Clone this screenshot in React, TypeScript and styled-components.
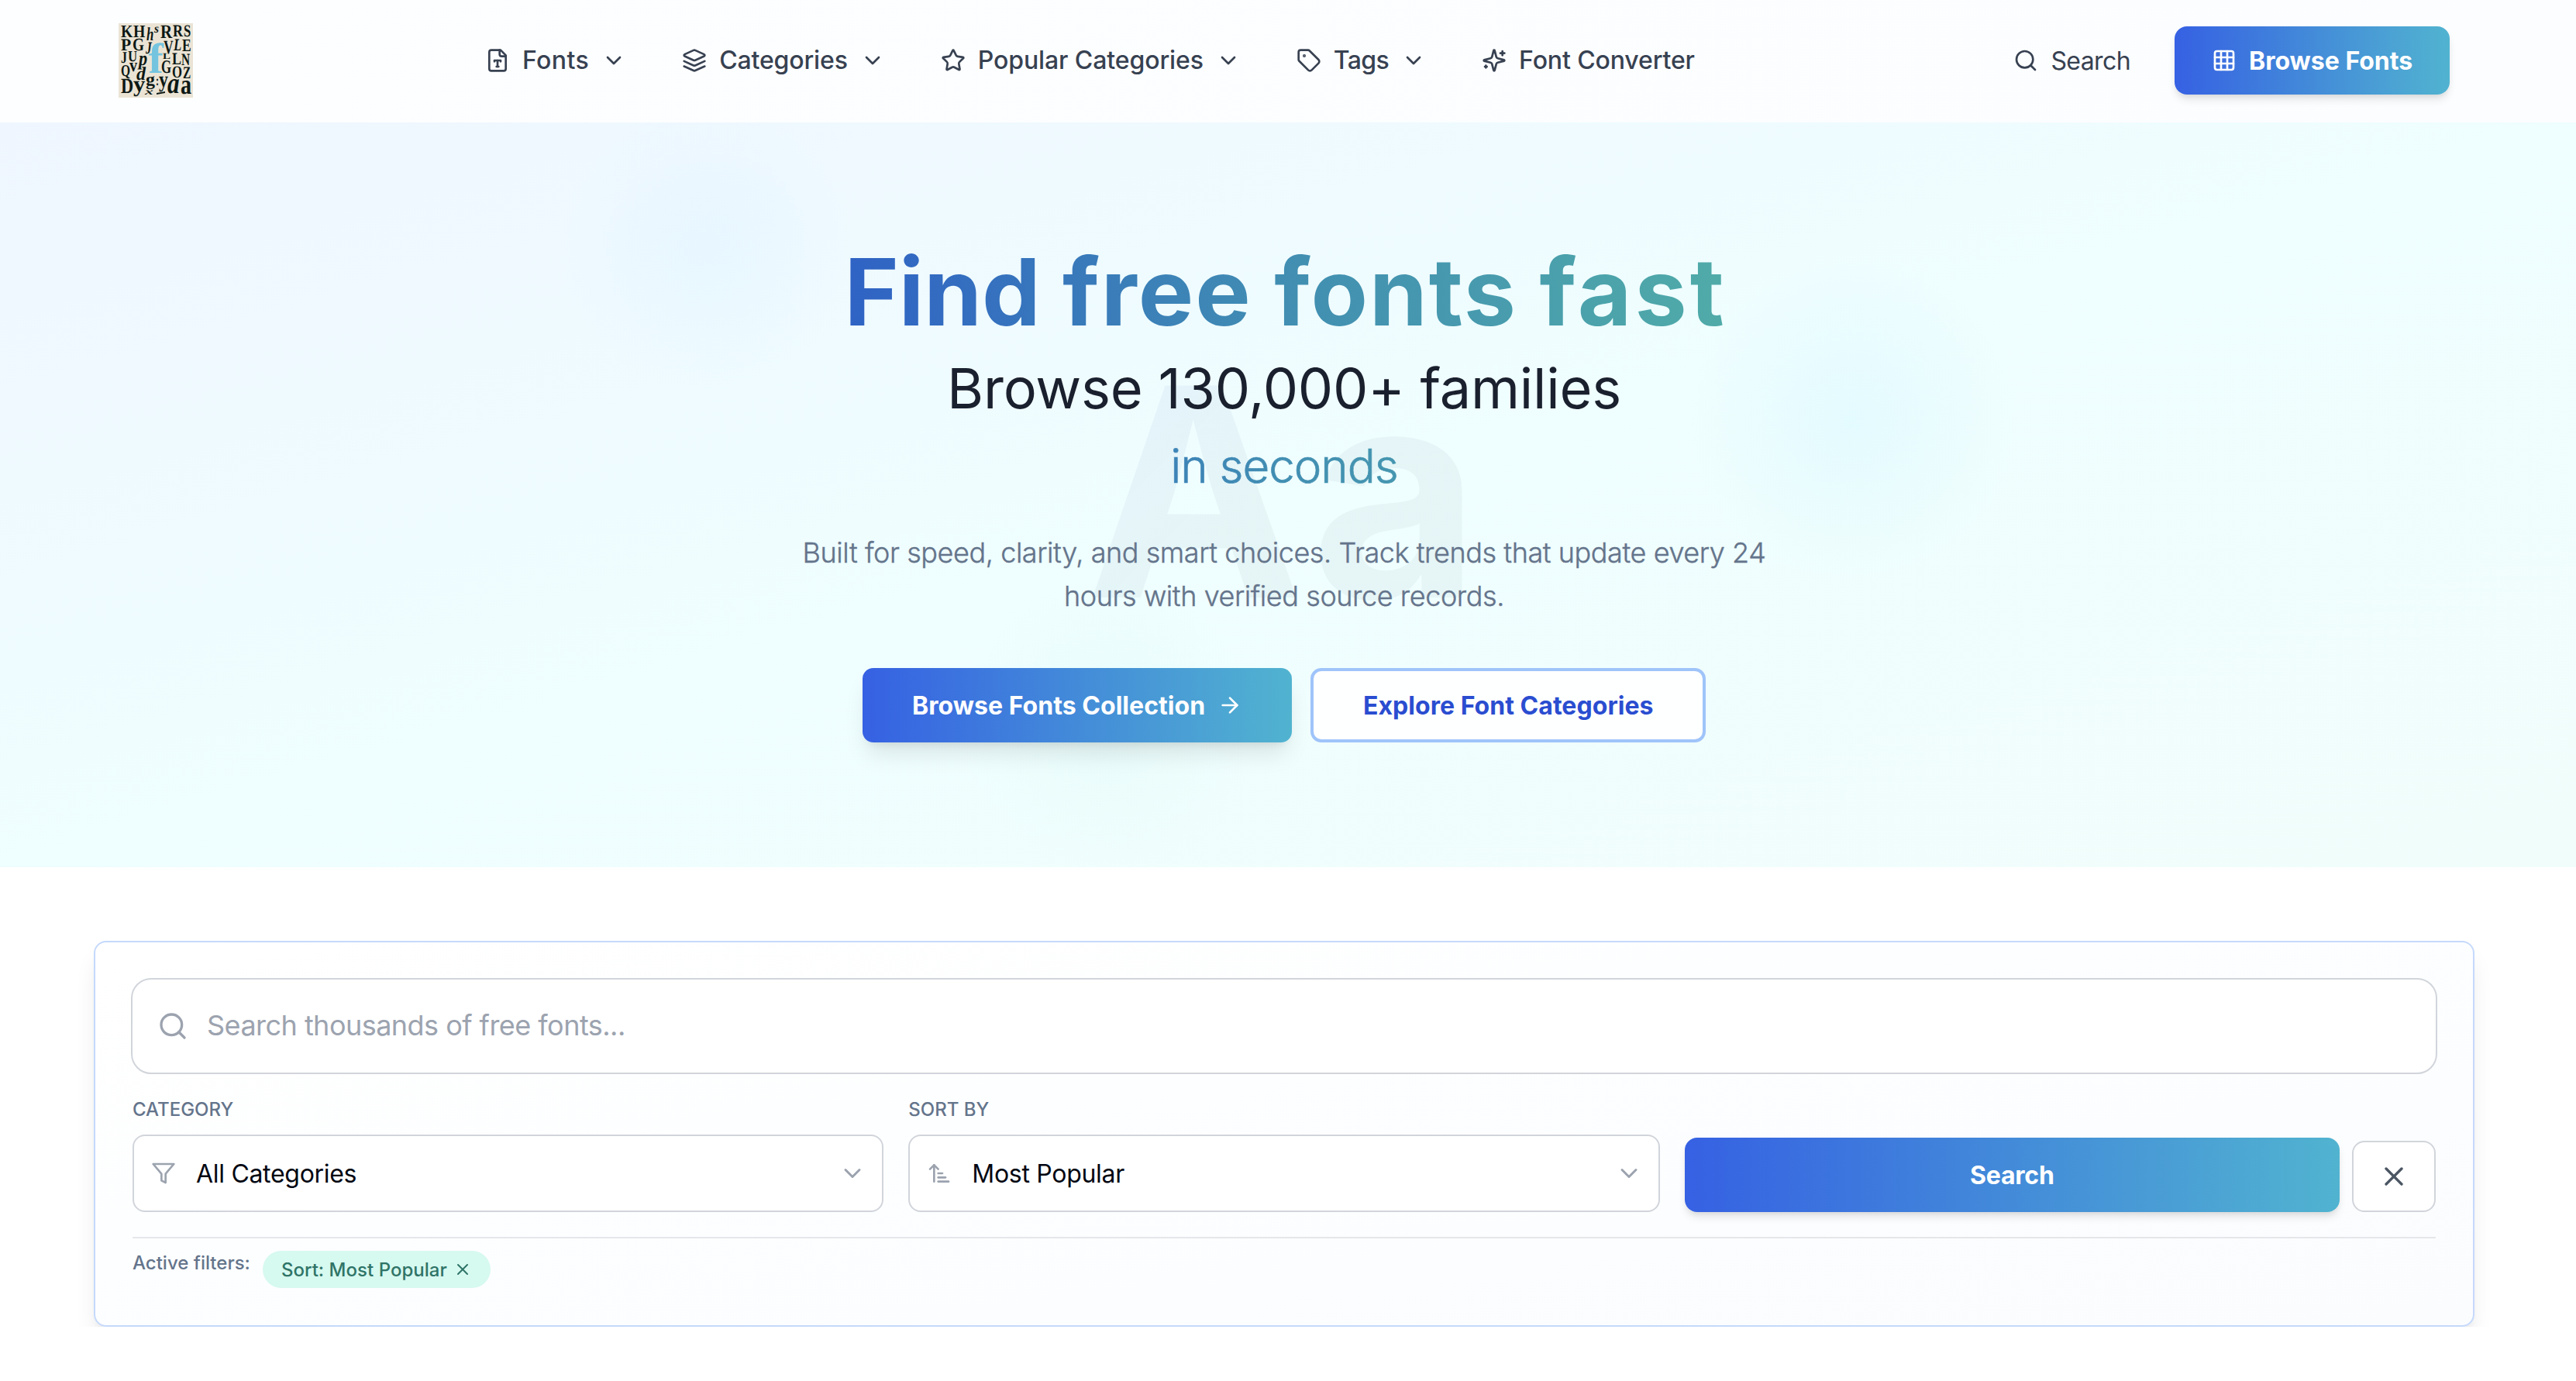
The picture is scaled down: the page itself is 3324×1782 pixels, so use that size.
import {
  ArrowRight,
  ArrowUpNarrowWide,
  ChevronDown,
  Grid3x3,
  Search,
  Star,
  Tag,
  X,
} from 'lucide-react';
import type { ReactNode } from 'react';
import styled, { createGlobalStyle, css } from 'styled-components';

const GlobalStyle = createGlobalStyle`
  *, *::before, *::after {
    box-sizing: border-box;
  }
  body {
    margin: 0;
    background: #ffffff;
    font-family: Inter, 'Liberation Sans', sans-serif;
    color: #374151;
    overflow: hidden;
  }
  button, input {
    font-family: inherit;
  }
  h1, p {
    margin: 0;
  }
  svg {
    flex-shrink: 0;
    display: block;
  }
`;

const primaryFill = css`
  background: linear-gradient(90deg, #3661e3 0%, #438bd9 50%, #51b3d0 100%);
  color: #ffffff;
`;

const Header = styled.header`
  display: flex;
  align-items: center;
  height: 158px;
  padding: 0 163px 2px 153px;
  background: linear-gradient(90deg, #fdfeff, #fcfdff);
`;

const NavBar = styled.nav`
  display: flex;
  align-items: center;
  gap: 72px;
  margin-left: 377px;
`;

const NavItem = styled.a<{ $spacing: number }>`
  display: flex;
  align-items: center;
  gap: 16px;
  font-size: 32px;
  line-height: 48px;
  font-weight: 500;
  letter-spacing: ${(props) => props.$spacing}px;
  white-space: nowrap;
`;

const HeaderActions = styled.div`
  display: flex;
  align-items: center;
  gap: 56px;
  margin-left: auto;
`;

const SearchLink = styled.a`
  display: flex;
  align-items: center;
  gap: 16px;
  margin-right: 1px;
  font-size: 32px;
  letter-spacing: -0.6px;
`;

const BrowseButton = styled.button`
  ${primaryFill}
  display: flex;
  align-items: center;
  gap: 16px;
  width: 355px;
  height: 88px;
  padding: 0 0 0 48px;
  border: 0;
  border-radius: 16px;
  font-size: 32px;
  font-weight: 700;
  white-space: nowrap;
  box-shadow:
    0 8px 12px -2px rgba(0, 0, 0, 0.1),
    0 4px 8px -4px rgba(0, 0, 0, 0.1);
`;

const Hero = styled.section`
  position: relative;
  display: flex;
  flex-direction: column;
  align-items: center;
  height: 961px;
  padding: 153px 10px 0 0;
  overflow: hidden;
  background:
    radial-gradient(circle 190px at 911px 160px, rgba(205, 234, 255, 0.22), rgba(205, 234, 255, 0.11) 50%, transparent),
    radial-gradient(circle 210px at 2390px 385px, rgba(195, 241, 255, 0.26), rgba(195, 241, 255, 0.13) 50%, transparent),
    radial-gradient(circle 190px at 1430px 780px, rgba(195, 243, 234, 0.17), rgba(195, 243, 234, 0.08) 50%, transparent),
    linear-gradient(to bottom right, #eff6ff 0%, #effeff 50%, #f1fdfb 100%);
`;

const Watermark = styled.div`
  position: absolute;
  top: 285px;
  left: 1401px;
  font-size: 376px;
  line-height: 384px;
  font-weight: 700;
  letter-spacing: 10px;
  color: transparent;
  background: linear-gradient(135deg, rgba(40, 80, 200, 0.055), rgba(16, 34, 50, 0.04) 45%);
  background-clip: text;
  -webkit-background-clip: text;
  user-select: none;
`;

const HeroTitle = styled.h1`
  position: relative;
  display: flex;
  flex-direction: column;
  width: 1146px;
  text-align: center;
  white-space: nowrap;
`;

const gradientText = css`
  background: linear-gradient(90deg, #2f62c5 0%, #418eb2 50%, #50aba8 100%);
  background-clip: text;
  -webkit-background-clip: text;
  color: transparent;
`;

const TitleMain = styled.span`
  ${gradientText}
  padding-left: 4px;
  font-size: 120px;
  line-height: 132px;
`;

const Word = styled.span<{ $spacing: number }>`
  letter-spacing: ${(props) => props.$spacing}px;
`;

const TitleSub = styled.span`
  margin-top: 13px;
  font-size: 72px;
  line-height: 90px;
  font-weight: 400;
  letter-spacing: -0.25px;
  color: #1a202e;
`;

const TitleAccent = styled.span`
  ${gradientText}
  margin-top: 17px;
  font-size: 60px;
  line-height: 76px;
  font-weight: 300;
  letter-spacing: -0.98px;
  -webkit-text-stroke: 0.7px transparent;
`;

const HeroText = styled.p`
  position: relative;
  width: 1280px;
  margin-top: 46px;
  font-size: 36px;
  line-height: 56px;
  font-weight: 300;
  letter-spacing: -0.42px;
  text-align: center;
  color: #64748b;
  -webkit-text-stroke: 0.4px #64748b;
`;

const HeroActions = styled.div`
  position: relative;
  display: flex;
  gap: 24px;
  margin-top: 65px;
`;

const HeroButton = styled.button<{ $outline?: boolean }>`
  display: flex;
  align-items: center;
  gap: 16px;
  height: 96px;
  padding: 0 0 0 64px;
  border: 0;
  border-radius: 14px;
  font-size: 32px;
  font-weight: 700;
  letter-spacing: 0.04px;
  white-space: nowrap;
  ${(props) =>
    props.$outline
      ? css`
          width: 510px;
          border: 4px solid #9fc4fa;
          background: rgba(255, 255, 255, 0.9);
          color: #2a4dd0;
        `
      : css`
          ${primaryFill}
          width: 554px;
          box-shadow:
            0 20px 30px -6px rgba(0, 0, 0, 0.1),
            0 8px 12px -8px rgba(0, 0, 0, 0.1);
        `}
`;

const FilterSection = styled.section`
  padding: 95px 131px 0 121px;
  overflow: hidden;
`;

const FilterCard = styled.div`
  height: 498px;
  padding: 46px 48px 0;
  border: 2px solid #c5d9fb;
  border-radius: 16px;
  background: linear-gradient(to bottom right, #ffffff, #fdfeff 40%, #fbfcfe);
  box-shadow:
    0 20px 30px -6px rgba(0, 0, 0, 0.1),
    0 8px 12px -8px rgba(0, 0, 0, 0.1);
`;

const SearchBox = styled.label`
  display: flex;
  align-items: center;
  gap: 24px;
  height: 124px;
  margin: 0 -2px;
  padding: 0 32px;
  border: 2px solid #d1d5db;
  border-radius: 26px;
  background: #ffffff;
  color: #9ca3af;
`;

const SearchInput = styled.input`
  flex: 1;
  height: 60px;
  padding: 0 0 2px;
  border: 0;
  outline: 0;
  background: transparent;
  font-size: 36px;
  letter-spacing: -0.53px;
  &::placeholder {
    color: #9ca3af;
  }
`;

const FilterGrid = styled.div`
  display: grid;
  grid-template-columns: repeat(3, 1fr);
  gap: 32px;
  align-items: end;
  margin-top: 30px;
`;

const Field = styled.div`
  display: flex;
  flex-direction: column;
  gap: 16px;
`;

const FieldLabel = styled.span`
  font-size: 24px;
  line-height: 32px;
  font-weight: 500;
  color: #64748b;
`;

const SelectBox = styled.div`
  display: flex;
  align-items: center;
  height: 100px;
  padding: 0 20px 0 22px;
  border: 2px solid #d1d5db;
  border-radius: 16px;
  background: #ffffff;
  color: #9ca3af;
`;

const SelectValue = styled.span`
  flex: 1;
  margin-left: 26px;
  font-size: 32px;
  letter-spacing: -0.3px;
  color: #030712;
`;

const FormActions = styled.div`
  display: flex;
  align-items: flex-end;
  gap: 16px;
`;

const SubmitButton = styled.button`
  ${primaryFill}
  flex: 1;
  height: 96px;
  border: 0;
  border-radius: 16px;
  font-size: 32px;
  font-weight: 700;
  letter-spacing: -0.2px;
  box-shadow:
    0 8px 12px -2px rgba(0, 0, 0, 0.1),
    0 4px 8px -4px rgba(0, 0, 0, 0.1);
`;

const ClearButton = styled.button`
  display: flex;
  align-items: center;
  justify-content: center;
  width: 108px;
  height: 92px;
  padding: 0;
  border: 2px solid #d1d5db;
  border-radius: 16px;
  background: #ffffff;
  color: #4b5563;
`;

const ActiveFilters = styled.div`
  display: flex;
  align-items: flex-start;
  gap: 16px;
  margin-top: 32px;
  padding-top: 16px;
  border-top: 2px solid #e5e7eb;
`;

const FilterPill = styled.span`
  display: flex;
  align-items: center;
  gap: 8px;
  height: 48px;
  padding: 0 24px;
  border-radius: 24px;
  background: #d6f9f0;
  font-size: 24px;
  font-weight: 500;
  letter-spacing: 0.03px;
  color: #2f7467;
`;

const Icon = ({ children }: { children: ReactNode }) => (
  <svg
    width="32"
    height="32"
    viewBox="0 0 24 24"
    fill="none"
    stroke="currentColor"
    strokeWidth="2"
    strokeLinecap="round"
    strokeLinejoin="round"
  >
    {children}
  </svg>
);

const FileTypeIcon = () => (
  <Icon>
    <path d="M15 2H6a2 2 0 0 0-2 2v16a2 2 0 0 0 2 2h12a2 2 0 0 0 2-2V7Z" />
    <path d="M14 2v4a2 2 0 0 0 2 2h4" />
    <path d="M9 13v-1h6v1" />
    <path d="M12 12v6" />
    <path d="M11 18h2" />
  </Icon>
);

const LayersIcon = () => (
  <Icon>
    <path d="m12.83 2.18a2 2 0 0 0-1.66 0L2.6 6.08a1 1 0 0 0 0 1.83l8.58 3.91a2 2 0 0 0 1.66 0l8.58-3.9a1 1 0 0 0 0-1.83Z" />
    <path d="m22 17.65-9.17 4.16a2 2 0 0 1-1.66 0L2 17.65" />
    <path d="m22 12.65-9.17 4.16a2 2 0 0 1-1.66 0L2 12.65" />
  </Icon>
);

const SparklesIcon = () => (
  <Icon>
    <path d="M9.937 15.5A2 2 0 0 0 8.5 14.063l-6.135-1.582a.5.5 0 0 1 0-.962L8.5 9.936A2 2 0 0 0 9.937 8.5l1.582-6.135a.5.5 0 0 1 .963 0L14.063 8.5A2 2 0 0 0 15.5 9.937l6.135 1.581a.5.5 0 0 1 0 .964L15.5 14.063a2 2 0 0 0-1.437 1.437l-1.582 6.135a.5.5 0 0 1-.963 0z" />
    <path d="M20 3v4" />
    <path d="M22 5h-4" />
    <path d="M4 17v2" />
    <path d="M5 18H3" />
  </Icon>
);

const FilterIcon = () => (
  <Icon>
    <polygon points="22 3 2 3 10 12.46 10 19 14 21 14 12.46 22 3" />
  </Icon>
);

// letter, x, baseline, font size, horizontal scale, italic
const logoLetters: [string, number, number, number, number, boolean?][] = [
  ['K', 3, 18, 23, 0.86],
  ['H', 19, 18, 23, 0.86],
  ['h', 36, 22, 24, 0.7, true],
  ['s', 46, 12, 16, 0.96, true],
  ['R', 54, 19, 25, 0.84],
  ['R', 70, 17, 22, 0.82],
  ['S', 84, 17, 22, 0.76],
  ['P', 3, 35, 22, 0.98],
  ['G', 18, 35, 23, 0.84],
  ['J', 35, 39, 22, 0.7, true],
  ['V', 58, 39, 25, 0.7],
  ['L', 71, 35, 22, 0.76, true],
  ['E', 82, 36, 23, 0.76],
  ['J', 3, 51, 21, 0.76],
  ['U', 12, 49, 20, 0.84],
  ['p', 26, 54, 26, 0.86, true],
  ['L', 57, 46, 11, 1.36],
  ['L', 69, 53, 22, 0.82],
  ['N', 81, 54, 22, 0.7],
  ['Q', 3, 68, 21, 0.74],
  ['v', 14, 62, 24, 0.84],
  ['d', 23, 73, 24, 1, true],
  ['G', 55, 64, 24, 0.7],
  ['O', 69, 70, 22, 0.76],
  ['Z', 83, 71, 22, 0.7],
  ['D', 3, 90, 28, 0.8],
  ['y', 19, 88, 29, 1.06],
  ['g', 35, 80, 23, 1.04],
  [':', 48, 80, 18, 0.68],
  ['y', 52, 82, 29, 0.82],
  ['x', 34, 92, 12, 1.8, true],
  ['a', 63, 90, 38, 0.82, true],
  ['a', 80, 91, 36, 0.78],
];

const Logo = () => (
  <svg width="96" height="96" viewBox="0 0 96 96">
    <rect width="96" height="96" fill="#ebe4d5" />
    <g
      fontFamily="'Liberation Serif', serif"
      fontWeight="700"
      fill="#0d1814"
      textRendering="geometricPrecision"
    >
      {logoLetters.map(([letter, x, y, size, scale, italic], i) => (
        <text
          key={i}
          transform={`translate(${x} ${y}) scale(${scale} 1)`}
          fontSize={size}
          fontStyle={italic ? 'italic' : 'normal'}
        >
          {letter}
        </text>
      ))}
      <path d="M49 90l11-2v2l-11 2z" />
      <text transform="translate(38.5 64) scale(1.06 1)" fontSize="55" fill="#74c4df">
        f
      </text>
    </g>
  </svg>
);

const navItems = [
  { label: 'Fonts', icon: <FileTypeIcon />, spacing: 0.4, menu: true },
  { label: 'Categories', icon: <LayersIcon />, spacing: -0.14, menu: true },
  { label: 'Popular Categories', icon: <Star size={32} />, spacing: -0.1, menu: true },
  { label: 'Tags', icon: <Tag size={32} />, spacing: -0.65, menu: true },
  { label: 'Font Converter', icon: <SparklesIcon />, spacing: -0.12, menu: false },
];

const App = () => {
  return (
    <>
      <GlobalStyle />
      <Header>
        <Logo />
        <NavBar>
          {navItems.map((item) => (
            <NavItem key={item.label} $spacing={item.spacing}>
              {item.icon}
              <span>{item.label}</span>
              {item.menu && <ChevronDown size={32} />}
            </NavItem>
          ))}
        </NavBar>
        <HeaderActions>
          <SearchLink>
            <Search size={32} />
            <span>Search</span>
          </SearchLink>
          <BrowseButton>
            <Grid3x3 size={32} />
            Browse Fonts
          </BrowseButton>
        </HeaderActions>
      </Header>

      <Hero>
        <Watermark aria-hidden>Aa</Watermark>
        <HeroTitle>
          <TitleMain>
            <Word $spacing={0}>Find</Word> <Word $spacing={2}>free</Word>{' '}
            <Word $spacing={2}>fonts</Word> <Word $spacing={4}>fast</Word>
          </TitleMain>
          <TitleSub>Browse 130,000+ families</TitleSub>
          <TitleAccent>in seconds</TitleAccent>
        </HeroTitle>
        <HeroText>
          Built for speed, clarity, and smart choices. Track trends that update
          every 24 hours with verified source records.
        </HeroText>
        <HeroActions>
          <HeroButton>
            Browse Fonts Collection
            <ArrowRight size={32} />
          </HeroButton>
          <HeroButton $outline>Explore Font Categories</HeroButton>
        </HeroActions>
      </Hero>

      <FilterSection>
        <FilterCard>
          <SearchBox>
            <Search size={40} />
            <SearchInput placeholder="Search thousands of free fonts..." />
          </SearchBox>
          <FilterGrid>
            <Field>
              <FieldLabel>CATEGORY</FieldLabel>
              <SelectBox>
                <FilterIcon />
                <SelectValue>All Categories</SelectValue>
                <ChevronDown size={36} />
              </SelectBox>
            </Field>
            <Field>
              <FieldLabel>SORT BY</FieldLabel>
              <SelectBox>
                <ArrowUpNarrowWide size={32} />
                <SelectValue>Most Popular</SelectValue>
                <ChevronDown size={36} />
              </SelectBox>
            </Field>
            <FormActions>
              <SubmitButton>Search</SubmitButton>
              <ClearButton aria-label="Clear filters">
                <X size={40} />
              </ClearButton>
            </FormActions>
          </FilterGrid>
          <ActiveFilters>
            <FieldLabel>Active filters:</FieldLabel>
            <FilterPill>
              Sort: Most Popular
              <X size={24} />
            </FilterPill>
          </ActiveFilters>
        </FilterCard>
      </FilterSection>
    </>
  );
};

export default App;
